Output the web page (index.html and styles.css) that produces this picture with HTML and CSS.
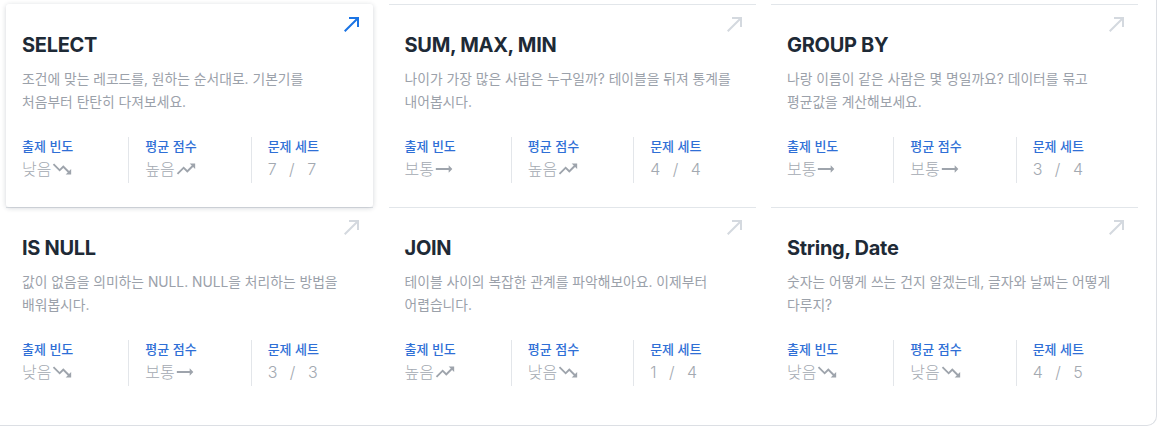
FILE: index.html
```html
<!DOCTYPE html>
<html lang="ko">
<head>
<meta charset="utf-8">
<title>SQL 카테고리</title>
<link rel="stylesheet" href="styles.css">
</head>
<body>
<div class="panel">
  <div class="grid">
    <a class="card active">
      <svg class="go" viewBox="0 0 24 24"><path d="M9 5v2h6.59L4 18.59 5.41 20 17 8.41V15h2V5z"/></svg>
      <h3 class="title">SELECT</h3>
      <p class="desc">조건에 맞는 레코드를, 원하는 순서대로. 기본기를<br>처음부터 탄탄히 다져보세요.</p>
      <div class="stats">
        <div class="stat"><span class="label">출제 빈도</span><span class="value">낮음<svg class="trend" viewBox="0 0 24 24"><path d="M16 18l2.29-2.29-4.88-4.88-4 4L2 7.41 3.41 6l6 6 4-4 6.3 6.29L22 12v6z"/></svg></span></div>
        <div class="stat"><span class="label">평균 점수</span><span class="value">높음<svg class="trend" viewBox="0 0 24 24"><path d="M16 6l2.29 2.29-4.88 4.88-4-4L2 16.59 3.41 18l6-6 4 4 6.3-6.29L22 12V6z"/></svg></span></div>
        <div class="stat"><span class="label">문제 세트</span><span class="value count">7 / 7</span></div>
      </div>
    </a>
    <a class="card">
      <svg class="go" viewBox="0 0 24 24"><path d="M9 5v2h6.59L4 18.59 5.41 20 17 8.41V15h2V5z"/></svg>
      <h3 class="title">SUM, MAX, MIN</h3>
      <p class="desc">나이가 가장 많은 사람은 누구일까? 테이블을 뒤져 통계를<br>내어봅시다.</p>
      <div class="stats">
        <div class="stat"><span class="label">출제 빈도</span><span class="value">보통<svg class="trend" viewBox="0 0 24 24"><path d="M16.01 11H2v2h14.01v3L20 12l-3.99-4z"/></svg></span></div>
        <div class="stat"><span class="label">평균 점수</span><span class="value">높음<svg class="trend" viewBox="0 0 24 24"><path d="M16 6l2.29 2.29-4.88 4.88-4-4L2 16.59 3.41 18l6-6 4 4 6.3-6.29L22 12V6z"/></svg></span></div>
        <div class="stat"><span class="label">문제 세트</span><span class="value count">4 / 4</span></div>
      </div>
    </a>
    <a class="card">
      <svg class="go" viewBox="0 0 24 24"><path d="M9 5v2h6.59L4 18.59 5.41 20 17 8.41V15h2V5z"/></svg>
      <h3 class="title">GROUP BY</h3>
      <p class="desc">나랑 이름이 같은 사람은 몇 명일까요? 데이터를 묶고<br>평균값을 계산해보세요.</p>
      <div class="stats">
        <div class="stat"><span class="label">출제 빈도</span><span class="value">보통<svg class="trend" viewBox="0 0 24 24"><path d="M16.01 11H2v2h14.01v3L20 12l-3.99-4z"/></svg></span></div>
        <div class="stat"><span class="label">평균 점수</span><span class="value">보통<svg class="trend" viewBox="0 0 24 24"><path d="M16.01 11H2v2h14.01v3L20 12l-3.99-4z"/></svg></span></div>
        <div class="stat"><span class="label">문제 세트</span><span class="value count">3 / 4</span></div>
      </div>
    </a>
    <a class="card">
      <svg class="go" viewBox="0 0 24 24"><path d="M9 5v2h6.59L4 18.59 5.41 20 17 8.41V15h2V5z"/></svg>
      <h3 class="title">IS NULL</h3>
      <p class="desc">값이 없음을 의미하는 NULL. NULL을 처리하는 방법을<br>배워봅시다.</p>
      <div class="stats">
        <div class="stat"><span class="label">출제 빈도</span><span class="value">낮음<svg class="trend" viewBox="0 0 24 24"><path d="M16 18l2.29-2.29-4.88-4.88-4 4L2 7.41 3.41 6l6 6 4-4 6.3 6.29L22 12v6z"/></svg></span></div>
        <div class="stat"><span class="label">평균 점수</span><span class="value">보통<svg class="trend" viewBox="0 0 24 24"><path d="M16.01 11H2v2h14.01v3L20 12l-3.99-4z"/></svg></span></div>
        <div class="stat"><span class="label">문제 세트</span><span class="value count">3 / 3</span></div>
      </div>
    </a>
    <a class="card">
      <svg class="go" viewBox="0 0 24 24"><path d="M9 5v2h6.59L4 18.59 5.41 20 17 8.41V15h2V5z"/></svg>
      <h3 class="title">JOIN</h3>
      <p class="desc">테이블 사이의 복잡한 관계를 파악해보아요. 이제부터<br>어렵습니다.</p>
      <div class="stats">
        <div class="stat"><span class="label">출제 빈도</span><span class="value">높음<svg class="trend" viewBox="0 0 24 24"><path d="M16 6l2.29 2.29-4.88 4.88-4-4L2 16.59 3.41 18l6-6 4 4 6.3-6.29L22 12V6z"/></svg></span></div>
        <div class="stat"><span class="label">평균 점수</span><span class="value">낮음<svg class="trend" viewBox="0 0 24 24"><path d="M16 18l2.29-2.29-4.88-4.88-4 4L2 7.41 3.41 6l6 6 4-4 6.3 6.29L22 12v6z"/></svg></span></div>
        <div class="stat"><span class="label">문제 세트</span><span class="value count">1 / 4</span></div>
      </div>
    </a>
    <a class="card">
      <svg class="go" viewBox="0 0 24 24"><path d="M9 5v2h6.59L4 18.59 5.41 20 17 8.41V15h2V5z"/></svg>
      <h3 class="title">String, Date</h3>
      <p class="desc">숫자는 어떻게 쓰는 건지 알겠는데, 글자와 날짜는 어떻게<br>다루지?</p>
      <div class="stats">
        <div class="stat"><span class="label">출제 빈도</span><span class="value">낮음<svg class="trend" viewBox="0 0 24 24"><path d="M16 18l2.29-2.29-4.88-4.88-4 4L2 7.41 3.41 6l6 6 4-4 6.3 6.29L22 12v6z"/></svg></span></div>
        <div class="stat"><span class="label">평균 점수</span><span class="value">낮음<svg class="trend" viewBox="0 0 24 24"><path d="M16 18l2.29-2.29-4.88-4.88-4 4L2 7.41 3.41 6l6 6 4-4 6.3 6.29L22 12v6z"/></svg></span></div>
        <div class="stat"><span class="label">문제 세트</span><span class="value count">4 / 5</span></div>
      </div>
    </a>
  </div>
</div>
</body>
</html>
```

FILE: styles.css
```css
* { box-sizing: border-box; }

html, body {
  margin: 0;
  background: #ffffff;
}

body {
  font-family: "Inter", "Noto Sans CJK KR", sans-serif;
  color: #1e2a36;
}

.panel {
  width: 1157px;
  height: 426px;
  border-right: 1px solid #dcdfe4;
  border-bottom: 1px solid #dcdfe4;
  border-bottom-right-radius: 10px;
  background: #ffffff;
}

.grid {
  display: grid;
  grid-template-columns: repeat(3, 367px);
  grid-template-rows: repeat(2, 203px);
  column-gap: 15.5px;
  padding: 4px 0 0 6px;
}

.card {
  position: relative;
  display: flex;
  flex-direction: column;
  padding: 26px 0 0 0;
  border-top: 1px solid #e2e6ea;
  background: #ffffff;
  text-decoration: none;
  color: inherit;
}

.card.active {
  border-top-color: transparent;
  border-radius: 3px;
  box-shadow: 0 1px 5px rgba(30, 40, 60, 0.2);
  z-index: 1;
}

.go {
  position: absolute;
  top: 7px;
  right: 9px;
  width: 24px;
  height: 24px;
  fill: #d4d9df;
}

.card.active .go {
  fill: #1b74e4;
}

.title {
  margin: 0;
  padding: 0 16px;
  font-size: 20px;
  line-height: 28px;
  font-weight: 700;
  letter-spacing: -0.3px;
  color: #1e2a36;
}

.desc {
  margin: 9px 0 0 0;
  padding: 0 16px;
  font-size: 13.8px;
  line-height: 23px;
  color: #9ba1aa;
}

.stats {
  display: grid;
  grid-template-columns: repeat(3, 1fr);
  margin-top: 23px;
}

.stat {
  display: flex;
  flex-direction: column;
  padding: 0 0 2px 16px;
}

.stat + .stat {
  border-left: 1px solid #e3e6ea;
}

.label {
  font-size: 13px;
  line-height: 18px;
  font-weight: 500;
  color: #2f6fd6;
}

.value {
  display: flex;
  align-items: center;
  margin-top: 2px;
  font-size: 16px;
  line-height: 24px;
  font-weight: 300;
  color: #a3a9b1;
}

.value.count {
  font-size: 16px;
  letter-spacing: 3.5px;
  word-spacing: 1px;
}

.trend {
  width: 22px;
  height: 22px;
  margin-left: 0;
  fill: #9ea4ac;
}
```
